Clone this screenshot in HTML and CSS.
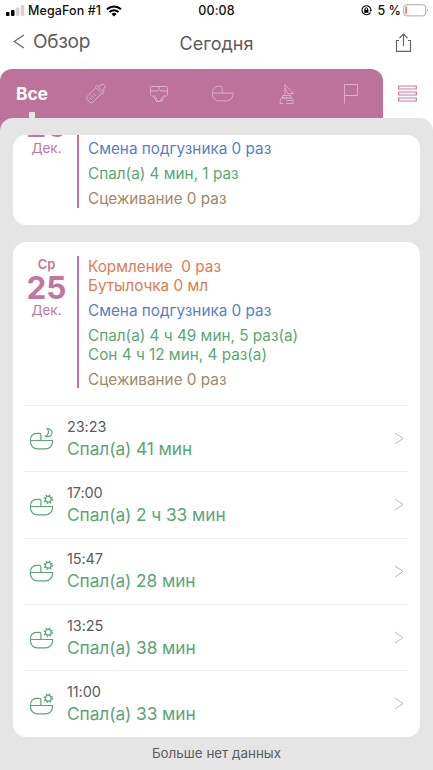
FILE: index.html
```html
<!DOCTYPE html>
<html lang="ru">
<head>
<meta charset="utf-8">
<title>Сегодня</title>
<link rel="stylesheet" href="styles.css">
</head>
<body>
<svg class="defs" aria-hidden="true">
  <symbol id="cradle" viewBox="0 0 26 24">
    <path d="M1.500 13.500h22v1.500a6.800 6.800 0 0 1-6.800 6.800H8.300a6.800 6.800 0 0 1-6.800-6.800z"/>
    <path d="M1.500 13.500c0-4.500 2.200-7.200 6.300-7.200h2.600q1.500 0 1.500 1.500v5.700"/>
  </symbol>
  <symbol id="moon" viewBox="0 0 26 24"><path d="M18.200 1.500c3.400.3 5.200 2.300 4.800 4.900-.4 2.500-3.700 4.100-6.400 2.700 2.700-1.100 4.100-4.200 1.600-7.600z"/></symbol>
  <symbol id="sun" viewBox="0 0 26 24"><circle cx="19.300" cy="6.300" r="2.900"/><circle class="rays" cx="19.300" cy="6.300" r="4"/></symbol>
  <symbol id="chevron" viewBox="0 0 10 13"><path d="M1 1l8 5.500-8 5.500"/></symbol>
</svg>
<header class="status">
  <div class="carrier">
    <svg width="19" height="11" viewBox="0 0 19 11"><rect x="0" y="7" width="3.500" height="4" rx="1"/><rect x="5" y="5" width="3.500" height="6" rx="1"/><g fill="#d2d2d2"><rect x="10" y="2.500" width="3.500" height="8.500" rx="1"/><rect x="14.700" y="0" width="3.500" height="11" rx="1"/></g></svg>
    <span class="carrier-name">MegaFon #1</span>
    <svg width="16" height="12" viewBox="0 0 16 12"><g fill="none" stroke="#000" stroke-width="2"><path d="M1 4.300a10.200 10.200 0 0 1 14 0M3.500 7a6.600 6.600 0 0 1 9 0"/></g><path d="M8 11.500L5.500 9a3.600 3.600 0 0 1 5 0z"/></svg>
  </div>
  <span class="clock">00:08</span>
  <div class="power">
    <svg width="11" height="11" viewBox="0 0 11 11"><path d="M9.400 7.500A4.500 4.500 0 1 1 10 5" fill="none" stroke="#000" stroke-width="1.100"/><path d="M8.500 5H11L9.800 7z"/><rect x="3.200" y="4.800" width="4.200" height="3" /><path d="M4 5V4a1.300 1.300 0 0 1 2.600 0v1" fill="none" stroke="#000" stroke-width=".9"/></svg>
    <span class="percent">5 %</span>
    <svg width="26" height="13" viewBox="0 0 26 13"><rect x=".7" y=".7" width="22" height="11.200" rx="3" fill="none" stroke="#aaa"/><path d="M24 4.500q1.700 1.800 0 3.600z" fill="#999"/><rect x="2.300" y="2.500" width="1.600" height="7.500" rx=".8" fill="#f4665f"/></svg>
  </div>
</header>
<nav class="nav">
  <a class="back"><svg width="12" height="15" viewBox="0 0 12 15"><path d="M11 1L1.200 7.500 11 14"/></svg><span>Обзор</span></a>
  <h1>Сегодня</h1>
  <svg class="share" width="17" height="19" viewBox="0 0 17 19"><path d="M4 7.500H1.500v10.800h14V7.500H13M8.500 13V1M4.500 5l4-4 4 4"/></svg>
</nav>
<div class="tabs-row">
  <div class="tabs">
    <div class="tab active">Все</div>
    <div class="tab"><svg width="22" height="22" viewBox="0 0 22 22"><path d="M2.200 13.300L10.800 4.600l5.800 5.800-8.700 8.700q-1.600 1.500-3.200 0l-2.500-2.500q-1.600-1.600 0-3.300zM10.200 4l1.700-1.600 7.100 7.100-1.700 1.600M13.200 3.600q2-1.600 3-1.200.6-1.700 1.800-1.400l2.300 2.300q.2 1.300-1.400 1.900.4 1.300-1.200 3M8.200 10.500l2.500 2.500M6.200 12.500l2.500 2.500M4.200 14.500l2.500 2.500"/></svg></div>
    <div class="tab"><svg width="20" height="18" viewBox="0 0 20 18"><path d="M2.500 1.500h15q1 0 1 1v7q0 1-1 1.200c-2 .5-3.300 1.500-3.500 3.300q-.2 2.500-2.500 2.500h-3Q6.200 16.500 6 14c-.2-1.800-1.500-2.800-3.500-3.300q-1-.2-1-1.200v-7q0-1 1-1zM1.500 6H7q2.500 0 3-1.500Q10.500 6 13 6h5.500M10 1.500v3M4 11q3.200-.7 4.500 5.500M16 11q-3.200-.7-4.500 5.500"/></svg></div>
    <div class="tab"><svg width="22" height="20" viewBox="1 5 23.500 19"><use href="#cradle" width="26" height="24"/></svg></div>
    <div class="tab"><svg width="18" height="22" viewBox="0 0 18 22"><path d="M7 12V1.500l8.500 9-5.500.3L7 5M4.500 12.500h8.300V15H4.500zM2.200 21v-3.500q0-2.500 2.300-2.500h8.300q2.200 0 2.200 2.500V21M2.200 20.500h3M8 17.500h6M8 20.500h6.500"/></svg></div>
    <div class="tab"><svg width="16" height="21" viewBox="0 0 16 21"><path d="M1.500 20.500V1.500h13v11h-13"/></svg></div>
  </div>
  <svg class="menu" width="19" height="17" viewBox="0 0 19 17"><path d="M.7 1h17.600v3H.7zM.7 7h17.600v3H.7zM.7 13h17.600v3H.7z"/></svg>
</div>
<div class="stage">
<main class="panel">
  <div class="list">
    <section class="card scrolled">
      <div class="day">
        <div class="date"><b>26</b><span>Дек.</span></div>
        <div class="summary">
          <p class="diaper">Смена подгузника 0 раз</p>
          <p class="sleep">Спал(а) 4 мин, 1 раз</p>
          <p class="pump">Сцеживание 0 раз</p>
        </div>
      </div>
    </section>
    <section class="card">
      <div class="day">
        <div class="date"><i>Ср</i><b>25</b><span>Дек.</span></div>
        <div class="summary">
          <p class="feed">Кормление&nbsp; 0 раз<br>Бутылочка 0 мл</p>
          <p class="diaper">Смена подгузника 0 раз</p>
          <p class="sleep">Спал(а) 4 ч 49 мин, 5 раз(а)<br>Сон 4 ч 12 мин, 4 раз(а)</p>
          <p class="pump">Сцеживание 0 раз</p>
        </div>
      </div>
      <div class="event"><svg class="kind" viewBox="0 0 26 24"><use href="#cradle"/><use href="#moon"/></svg><div class="info"><time>23:23</time><span>Спал(а) 41 мин</span></div><svg class="go"><use href="#chevron"/></svg></div>
      <div class="event"><svg class="kind" viewBox="0 0 26 24"><use href="#cradle"/><use href="#sun"/></svg><div class="info"><time>17:00</time><span>Спал(а) 2 ч 33 мин</span></div><svg class="go"><use href="#chevron"/></svg></div>
      <div class="event"><svg class="kind" viewBox="0 0 26 24"><use href="#cradle"/><use href="#sun"/></svg><div class="info"><time>15:47</time><span>Спал(а) 28 мин</span></div><svg class="go"><use href="#chevron"/></svg></div>
      <div class="event"><svg class="kind" viewBox="0 0 26 24"><use href="#cradle"/><use href="#sun"/></svg><div class="info"><time>13:25</time><span>Спал(а) 38 мин</span></div><svg class="go"><use href="#chevron"/></svg></div>
      <div class="event"><svg class="kind" viewBox="0 0 26 24"><use href="#cradle"/><use href="#sun"/></svg><div class="info"><time>11:00</time><span>Спал(а) 33 мин</span></div><svg class="go"><use href="#chevron"/></svg></div>
    </section>
  </div>
  <footer>Больше нет данных</footer>
</main>
</div>
</body>
</html>
```
FILE: styles.css
```css
* { box-sizing: border-box; }
body {
  margin: 0;
  width: 433px;
  height: 770px;
  overflow: hidden;
  display: flex;
  flex-direction: column;
  background: #fff;
  color: #5c5c5e;
  font-family: Inter, "Liberation Sans", sans-serif;
}
svg { display: block; flex: none; }
.defs { position: absolute; width: 0; height: 0; }
.status {
  height: 20px;
  display: grid;
  grid-template-columns: 1fr auto 1fr;
  align-items: center;
  padding: 1px 4px 0 6px;
  color: #111;
  font-size: 12.5px;
  font-weight: 500;
}
.carrier, .power { display: flex; align-items: center; }
.carrier-name { margin: 0 5px 0 3px; letter-spacing: 0.1px; }
.clock { margin: 0 1px 0 -1px; letter-spacing: 0.1px; }
.power { justify-content: flex-end; }
.percent { margin: 0 2px 0 6px; }
.nav {
  height: 49px;
  display: grid;
  grid-template-columns: 1fr auto 1fr;
  align-items: center;
  padding: 0 21px 4px 13px;
}
.nav svg { fill: none; stroke: #66666a; stroke-width: 1.2; }
.back { display: flex; align-items: center; gap: 8px; font-size: 19px; letter-spacing: -0.2px; }
.back svg { margin-bottom: 2px; }
.back span { margin-bottom: 2px; }
.nav h1 { margin: 1px -4px 0 4px; font-size: 18px; font-weight: 400; }
.share { justify-self: end; }
.tabs-row { height: 49px; display: flex; }
.tabs {
  width: 383px;
  display: grid;
  grid-template-columns: repeat(6, 63.8px);
  background: #bd7399;
  border-radius: 12px 12px 0 0;
}
.tab { display: flex; align-items: center; justify-content: center; }
.tab svg { fill: none; stroke: #dcaec8; stroke-width: 1; }
.active { position: relative; color: #fff; font-size: 17.500px; font-weight: 700; letter-spacing: -0.2px; }
.active::after {
  content: "";
  position: absolute;
  bottom: 0;
  left: 29px;
  width: 6px;
  height: 6px;
  background: #e5e5e5;
}
.menu { margin: 16px 0 0 15px; fill: none; stroke: #c77ba4; stroke-width: 1.2; }
.stage { flex: 1; background: linear-gradient(90deg, #bd7399 383px, #fff 383px); }
.panel {
  height: 100%;
  padding: 17px 13px 0;
  background: #e5e5e5;
  border-radius: 13px 13px 0 0;
}
.list { display: flex; flex-direction: column; gap: 16.5px; }
.card {
  height: 495.500px;
  overflow: hidden;
  background: #fff;
  border-radius: 13px;
  padding: 14.500px 12px 0;
}
.card.scrolled { height: 90px; padding-top: 0; }
.day { display: flex; height: 149px; }
.date {
  width: 43px;
  display: flex;
  flex-direction: column;
  align-items: center;
  color: #c2769f;
}
.date i { font-style: normal; font-weight: 600; font-size: 13px; line-height: 17px; }
.date b { font-size: 31.500px; line-height: 29px; }
.date span { font-size: 13.500px; line-height: 17px; }
.summary {
  height: 132px;
  margin-left: 9px;
  padding: 2.300px 0 0 9px;
  border-left: 2px solid #c2769f;
  font-size: 15.300px;
  line-height: 18.600px;
  white-space: nowrap;
}
.scrolled .date { margin-top: -24px; }
.scrolled .summary { height: 73px; padding-top: 5px; }
.summary p { margin: 0 0 6.500px; }
.feed { color: #e27b51; }
.diaper { color: #5682c5; }
.sleep { color: #5ba677; }
.pump { color: #a28866; }
.event {
  height: 66.300px;
  display: flex;
  align-items: center;
  border-top: 1px solid #efefef;
}
.kind { width: 26px; height: 24px; margin-left: 4px; fill: none; stroke: #5ba677; stroke-width: 1.200; }
.rays { stroke-width: 1.500; stroke-dasharray: 1.570 1.571; }
.info { flex: 1; display: flex; flex-direction: column; margin-left: 12px; }
.info time { font-size: 14.500px; line-height: 20px; letter-spacing: -0.100px; }
.info span { color: #5ba677; font-size: 17.300px; line-height: 24px; letter-spacing: -0.070px; }
.go { width: 10px; height: 13px; margin-right: 4px; fill: none; stroke: #b8b8ba; stroke-width: 1; }
footer { margin-top: 8px; text-align: center; font-size: 13.400px; line-height: 17px; }
```
